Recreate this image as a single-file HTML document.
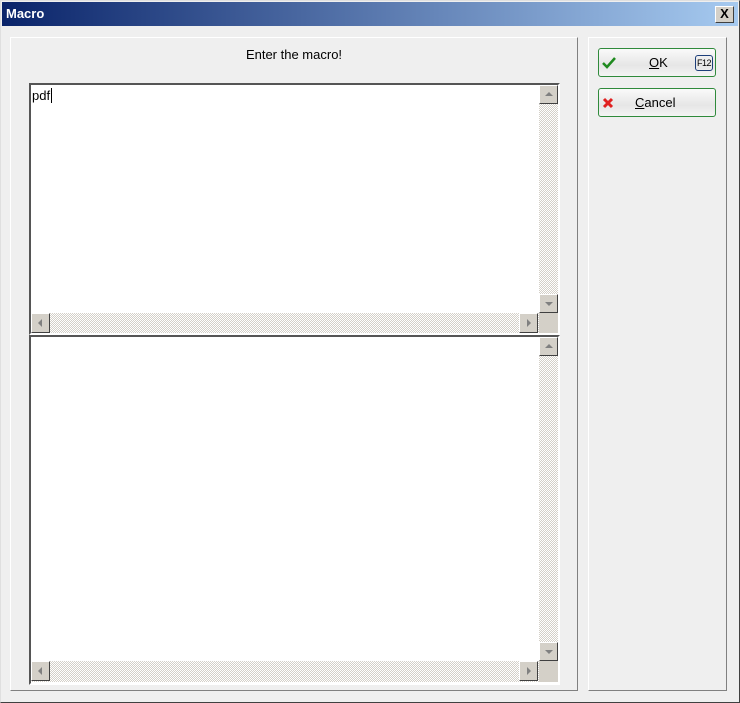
<!DOCTYPE html>
<html><head><meta charset="utf-8"><style>
*{box-sizing:border-box;margin:0;padding:0}
body{width:740px;height:703px;background:#efefef;position:relative;overflow:hidden;font-family:"Liberation Sans",sans-serif;font-size:13px;color:#000}
.a{position:absolute}
#win{left:0;top:0;width:740px;height:703px;border:1px solid;border-color:#dfdfdf #404040 #404040 #dfdfdf}
#title{left:2px;top:2px;width:736px;height:24px;background:linear-gradient(to right,#0a246a,#a6caf0)}
#title span{position:absolute;left:4px;top:4px;color:#fff;font-weight:bold;font-size:13px}
#close{left:715px;top:6px;width:19px;height:17px;background:#d4d0c8;border:1px solid;border-color:#fff #404040 #404040 #fff;font-weight:bold;font-size:13px;text-align:center;line-height:14px}
.panel{border:1px solid;border-color:#fff #808080 #808080 #fff}
.ed{background:#fff;border:2px solid;border-color:#555 #fff #fff #555}
.vs{background:repeating-conic-gradient(#d4d0c8 0 25%,#fff 0 50%) 0 0/2px 2px}
.btn{background:#d4d0c8;border:1px solid;border-color:#fff #404040 #404040 #fff;width:19px;height:19px}
.tri{position:absolute;width:0;height:0}
.gb{border:1px solid #2f8a3b;border-radius:3px;background:linear-gradient(#fafafa,#e6e6e6 60%,#f4f4f4);width:118px;height:29px}
</style></head><body>
<div class="a" id="win"></div>
<div class="a" id="title"><span>Macro</span></div>
<div class="a" id="close">X</div>

<div class="a panel" style="left:10px;top:37px;width:568px;height:654px"></div>
<div class="a panel" style="left:588px;top:37px;width:139px;height:654px"></div>

<div class="a" style="left:10px;top:47px;width:568px;text-align:center">Enter the macro!</div>

<div class="a ed" style="left:29px;top:83px;width:531px;height:252px"></div>
<div class="a" style="left:32px;top:88px">pdf<span style="border-left:1px solid #000;margin-left:1px"></span></div>
<div class="a vs" style="left:539px;top:85px;width:19px;height:228px"></div>
<div class="a btn" style="left:539px;top:85px"><div class="tri" style="left:5px;top:6px;border:4px solid transparent;border-bottom:4px solid #808080;border-top:0"></div></div>
<div class="a btn" style="left:539px;top:294px"><div class="tri" style="left:5px;top:7px;border:4px solid transparent;border-top:4px solid #808080;border-bottom:0"></div></div>
<div class="a vs" style="left:31px;top:313px;width:508px;height:20px"></div>
<div class="a btn" style="left:31px;top:313px;height:20px"><div class="tri" style="left:6px;top:5px;border:4px solid transparent;border-right:4px solid #808080;border-left:0"></div></div>
<div class="a btn" style="left:519px;top:313px;height:20px"><div class="tri" style="left:7px;top:5px;border:4px solid transparent;border-left:4px solid #808080;border-right:0"></div></div>
<div class="a" style="left:539px;top:313px;width:19px;height:20px;background:#d4d0c8"></div>

<div class="a ed" style="left:29px;top:335px;width:531px;height:350px"></div>
<div class="a vs" style="left:539px;top:337px;width:19px;height:324px"></div>
<div class="a btn" style="left:539px;top:337px"><div class="tri" style="left:5px;top:6px;border:4px solid transparent;border-bottom:4px solid #808080;border-top:0"></div></div>
<div class="a btn" style="left:539px;top:642px"><div class="tri" style="left:5px;top:7px;border:4px solid transparent;border-top:4px solid #808080;border-bottom:0"></div></div>
<div class="a vs" style="left:31px;top:661px;width:508px;height:21px"></div>
<div class="a btn" style="left:31px;top:661px;height:20px"><div class="tri" style="left:6px;top:5px;border:4px solid transparent;border-right:4px solid #808080;border-left:0"></div></div>
<div class="a btn" style="left:519px;top:661px;height:20px"><div class="tri" style="left:7px;top:5px;border:4px solid transparent;border-left:4px solid #808080;border-right:0"></div></div>
<div class="a" style="left:539px;top:661px;width:19px;height:21px;background:#d4d0c8"></div>

<div class="a gb" style="left:598px;top:48px">
 <svg class="a" style="left:3px;top:8px" width="14" height="12" viewBox="0 0 14 12"><path d="M1 6 L5 10 L13 1" stroke="#1f8a1f" stroke-width="2.5" fill="none"/></svg>
 <div class="a" style="left:50px;top:6px"><u>O</u>K</div>
 <div class="a" style="left:96px;top:6px;width:18px;height:16px;border:1px solid #1d3f7a;border-radius:3px;font-size:9px;text-align:center;line-height:14px;letter-spacing:-0.5px">F12</div>
</div>
<div class="a gb" style="left:598px;top:88px">
 <svg class="a" style="left:3px;top:8px" width="12" height="12" viewBox="0 0 12 12"><path d="M2 2 L10 10 M10 2 L2 10" stroke="#e02020" stroke-width="3" fill="none"/></svg>
 <div class="a" style="left:36px;top:6px"><u>C</u>ancel</div>
</div>
</body></html>
